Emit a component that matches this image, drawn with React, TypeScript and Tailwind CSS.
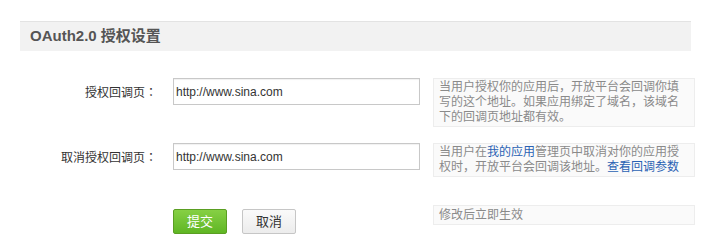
import React from 'react';

const font = { fontFamily: '"Liberation Sans", "Noto Sans CJK SC", sans-serif' };

function HelpBox({ children, className = '' }: { children: React.ReactNode; className?: string }) {
  return (
    <div className={`border border-[#ededed] bg-[#fafafa] px-[5px] text-[12px] leading-[15px] text-[#8a8a8a] ${className}`}>
      {children}
    </div>
  );
}

function Row({ label, value, help }: { label: string; value: string; help: React.ReactNode }) {
  return (
    <div className="flex items-start">
      <div className="w-[157px] shrink-0 pt-[6px] text-right text-[12px] leading-[15px] text-[#333]">
        {label}
        <span style={{ fontFamily: '"Noto Sans CJK JP", sans-serif' }}>：</span>
      </div>
      <input
        readOnly
        value={value}
        className="ml-[16px] h-[27px] w-[247px] shrink-0 border border-[#c8c8c8] px-[2px] text-[12px] text-[#333] shadow-[inset_0_1px_1px_rgba(0,0,0,0.06)] outline-none"
        style={font}
      />
      <HelpBox className="ml-[13px] w-[262px] py-[1px]">{help}</HelpBox>
    </div>
  );
}

export default function App() {
  return (
    <div className="h-[252px] w-[711px] bg-white pt-[21px]" style={font}>
      <div className="mx-[20px] flex h-[30px] items-center border-t border-[#e3e3e3] bg-[#f2f2f2] pl-[10px]">
        <h2 className="text-[15px] font-bold text-[#555]">OAuth2.0 授权设置</h2>
      </div>

      <div className="mt-[27px] space-y-[16px]">
        <Row
          label="授权回调页"
          value="http://www.sina.com"
          help={<>当用户授权你的应用后，开放平台会回调你填写的这个地址。如果应用绑定了域名，该域名下的回调页地址都有效。</>}
        />
        <Row
          label="取消授权回调页"
          value="http://www.sina.com"
          help={
            <>
              当用户在<span className="text-[#2a62b3]">我的应用</span>管理页中取消对你的应用授权时，开放平台会回调该地址。
              <span className="text-[#2a62b3]">查看回调参数</span>
            </>
          }
        />
      </div>

      <div className="mt-[28px] flex items-start">
        <div className="w-[173px] shrink-0" />
        <div className="flex w-[247px] shrink-0 gap-[15px] pt-[4px]">
          <button className="h-[25px] w-[54px] rounded-[2px] border border-[#5a9e22] bg-gradient-to-b from-[#86d044] to-[#5fb623] text-[13px] text-white">
            提交
          </button>
          <button className="h-[25px] w-[54px] rounded-[2px] border border-[#c6c6c6] bg-gradient-to-b from-[#fafafa] to-[#ececec] text-[13px] text-[#333]">
            取消
          </button>
        </div>
        <HelpBox className="ml-[13px] h-[20px] w-[262px] pt-[2px]">修改后立即生效</HelpBox>
      </div>
    </div>
  );
}
